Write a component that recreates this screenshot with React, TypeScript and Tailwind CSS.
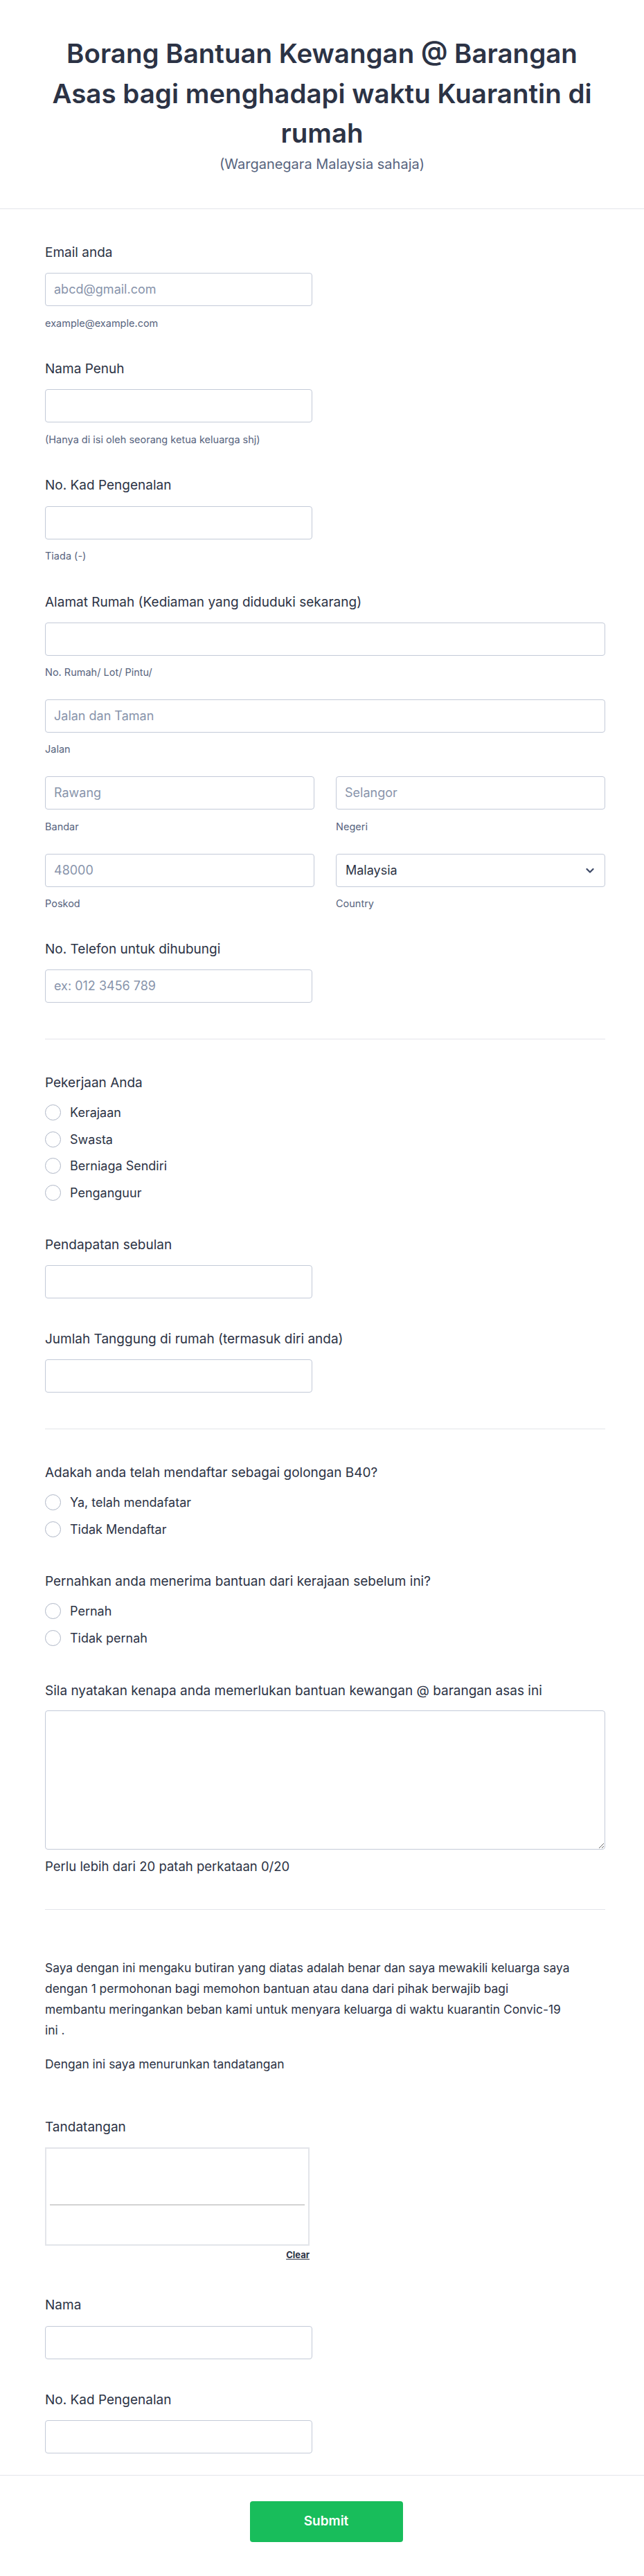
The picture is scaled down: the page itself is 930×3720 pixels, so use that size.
import React from 'react';

// form field helpers
const Label = ({ children, className = '' }: { children: React.ReactNode; className?: string }) => (
  <label className={`block text-[19px] leading-[24px] font-normal text-[#2c3345] ${className}`}>{children}</label>
);

const TextInput = ({ placeholder, wide = false, className = '' }: { placeholder?: string; wide?: boolean; className?: string }) => (
  <input
    type="text"
    placeholder={placeholder}
    className={`block h-[48px] ${wide ? 'w-full' : 'w-[386px]'} rounded-[4px] border border-[#c3cad8] bg-white px-[12px] text-[18px] text-[#2c3345] placeholder:text-[#8894ab] outline-none ${className}`}
  />
);

const SubLabel = ({ children, className = '' }: { children: React.ReactNode; className?: string }) => (
  <p className={`text-[14.5px] leading-[20px] text-[#57647e] ${className}`}>{children}</p>
);

const Radio = ({ label }: { label: string }) => (
  <label className="flex h-[38.5px] items-center gap-[13px]">
    <span className="h-[23px] w-[23px] rounded-full border-[1.5px] border-[#aeb6c6] bg-white" />
    <span className="text-[18px] text-[#2c3345]">{label}</span>
  </label>
);

const Divider = () => <div className="h-px w-full bg-[#e3e5ea]" />;

export default function App() {
  return (
    <div className="min-h-[3720px] w-[930px] bg-white font-['Inter',sans-serif] text-[#2c3345]">
      {/* Header */}
      <header className="px-[60px] pt-[49px] pb-[50px] text-center">
        <h1 className="text-[38.5px] leading-[57.5px] font-semibold text-[#2c3345]">
          Borang Bantuan Kewangan @ Barangan Asas bagi menghadapi waktu Kuarantin di rumah
        </h1>
        <p className="mt-[1px] text-[20px] leading-[28px] text-[#57647e]">(Warganegara Malaysia sahaja)</p>
      </header>
      <Divider />

      <div className="ml-[65px] w-[809px]">
        {/* Email */}
        <Label className="mt-[51px]">Email anda</Label>
        <TextInput placeholder="abcd@gmail.com" className="mt-[17px]" />
        <SubLabel className="mt-[15px]">example@example.com</SubLabel>

        {/* Nama */}
        <Label className="mt-[44px]">Nama Penuh</Label>
        <TextInput className="mt-[17px]" />
        <SubLabel className="mt-[15px]">(Hanya di isi oleh seorang ketua keluarga shj)</SubLabel>

        {/* IC */}
        <Label className="mt-[44px]">No. Kad Pengenalan</Label>
        <TextInput className="mt-[18px]" />
        <SubLabel className="mt-[14px]">Tiada (-)</SubLabel>

        {/* Alamat */}
        <Label className="mt-[45px]">Alamat Rumah (Kediaman yang diduduki sekarang)</Label>
        <TextInput wide className="mt-[17px]" />
        <SubLabel className="mt-[14px]">No. Rumah/ Lot/ Pintu/</SubLabel>
        <TextInput wide placeholder="Jalan dan Taman" className="mt-[29px]" />
        <SubLabel className="mt-[14px]">Jalan</SubLabel>
        <div className="mt-[29px] grid grid-cols-2 gap-x-[31px]">
          <div>
            <TextInput wide placeholder="Rawang" />
            <SubLabel className="mt-[15px]">Bandar</SubLabel>
          </div>
          <div>
            <TextInput wide placeholder="Selangor" />
            <SubLabel className="mt-[15px]">Negeri</SubLabel>
          </div>
        </div>
        <div className="mt-[29px] grid grid-cols-2 gap-x-[31px]">
          <div>
            <TextInput wide placeholder="48000" />
            <SubLabel className="mt-[14px]">Poskod</SubLabel>
          </div>
          <div>
            <div className="relative flex h-[48px] w-full items-center rounded-[4px] border border-[#c3cad8] bg-white px-[13px]">
              <span className="text-[18px] text-[#2c3345]">Malaysia</span>
              <svg className="absolute right-[15px] top-[19px]" width="12" height="9" viewBox="0 0 12 9" fill="none">
                <path d="M1.5 2l4.5 4.5L10.5 2" stroke="#3c4866" strokeWidth="2.2" strokeLinecap="round" strokeLinejoin="round" />
              </svg>
            </div>
            <SubLabel className="mt-[14px]">Country</SubLabel>
          </div>
        </div>

        {/* Telefon */}
        <Label className="mt-[44px]">No. Telefon untuk dihubungi</Label>
        <TextInput placeholder="ex: 012 3456 789" className="mt-[17px]" />

        <div className="mt-[52px]">
          <Divider />
        </div>

        {/* Pekerjaan */}
        <Label className="mt-[51px]">Pekerjaan Anda</Label>
        <div className="mt-[12px]">
          <Radio label="Kerajaan" />
          <Radio label="Swasta" />
          <Radio label="Berniaga Sendiri" />
          <Radio label="Penganguur" />
        </div>

        <Label className="mt-[44px]">Pendapatan sebulan</Label>
        <TextInput className="mt-[17px]" />

        <Label className="mt-[47px]">Jumlah Tanggung di rumah (termasuk diri anda)</Label>
        <TextInput className="mt-[17px]" />

        <div className="mt-[52px]">
          <Divider />
        </div>

        <Label className="mt-[51px]">Adakah anda telah mendaftar sebagai golongan B40?</Label>
        <div className="mt-[12px]">
          <Radio label="Ya, telah mendafatar" />
          <Radio label="Tidak Mendaftar" />
        </div>

        <Label className="mt-[44px]">Pernahkan anda menerima bantuan dari kerajaan sebelum ini?</Label>
        <div className="mt-[12px]">
          <Radio label="Pernah" />
          <Radio label="Tidak pernah" />
        </div>

        <Label className="mt-[45px]">Sila nyatakan kenapa anda memerlukan bantuan kewangan @ barangan asas ini</Label>
        <textarea className="mt-[16px] block h-[201px] w-full resize rounded-[4px] border border-[#c3cad8] bg-white p-[12px] text-[18px] outline-none" />
        <p className="mt-[12px] text-[18.5px] leading-[24px] text-[#2c3345]">Perlu lebih dari 20 patah perkataan 0/20</p>

        <div className="mt-[50px]">
          <Divider />
        </div>

        {/* Declaration */}
        <p className="mt-[69px] text-[17.4px] leading-[30px] text-[#2c3345]">
          Saya dengan ini mengaku butiran yang diatas adalah benar dan saya mewakili keluarga saya
          <br />
          dengan 1 permohonan bagi memohon bantuan atau dana dari pihak berwajib bagi
          <br />
          membantu meringankan beban kami untuk menyara keluarga di waktu kuarantin Convic-19
          <br />
          ini .
        </p>
        <p className="mt-[19px] text-[17.4px] leading-[30px] text-[#2c3345]">Dengan ini saya menurunkan tandatangan</p>

        {/* Signature */}
        <Label className="mt-[64px]">Tandatangan</Label>
        <div className="mt-[17px] w-[382px]">
          <div className="relative h-[142px] w-full border-2 border-[#e3e5ea] bg-white">
            <div className="absolute left-[5px] right-[5px] top-[80px] h-[2px] bg-[#d3d3d3]" />
          </div>
          <div className="mt-[4px] text-right text-[13px] leading-[18px] font-bold text-[#2c3345] underline">Clear</div>
        </div>

        <Label className="mt-[52px]">Nama</Label>
        <TextInput className="mt-[18px]" />

        <Label className="mt-[47px]">No. Kad Pengenalan</Label>
        <TextInput className="mt-[17px]" />
      </div>

      <div className="mt-[31px]">
        <Divider />
      </div>

      <div className="flex justify-center pt-[37px] pb-[50px]">
        <button className="ml-[12px] h-[59px] w-[221px] rounded-[4px] bg-[#18bd5b] text-[19px] font-semibold text-white">
          Submit
        </button>
      </div>
    </div>
  );
}
